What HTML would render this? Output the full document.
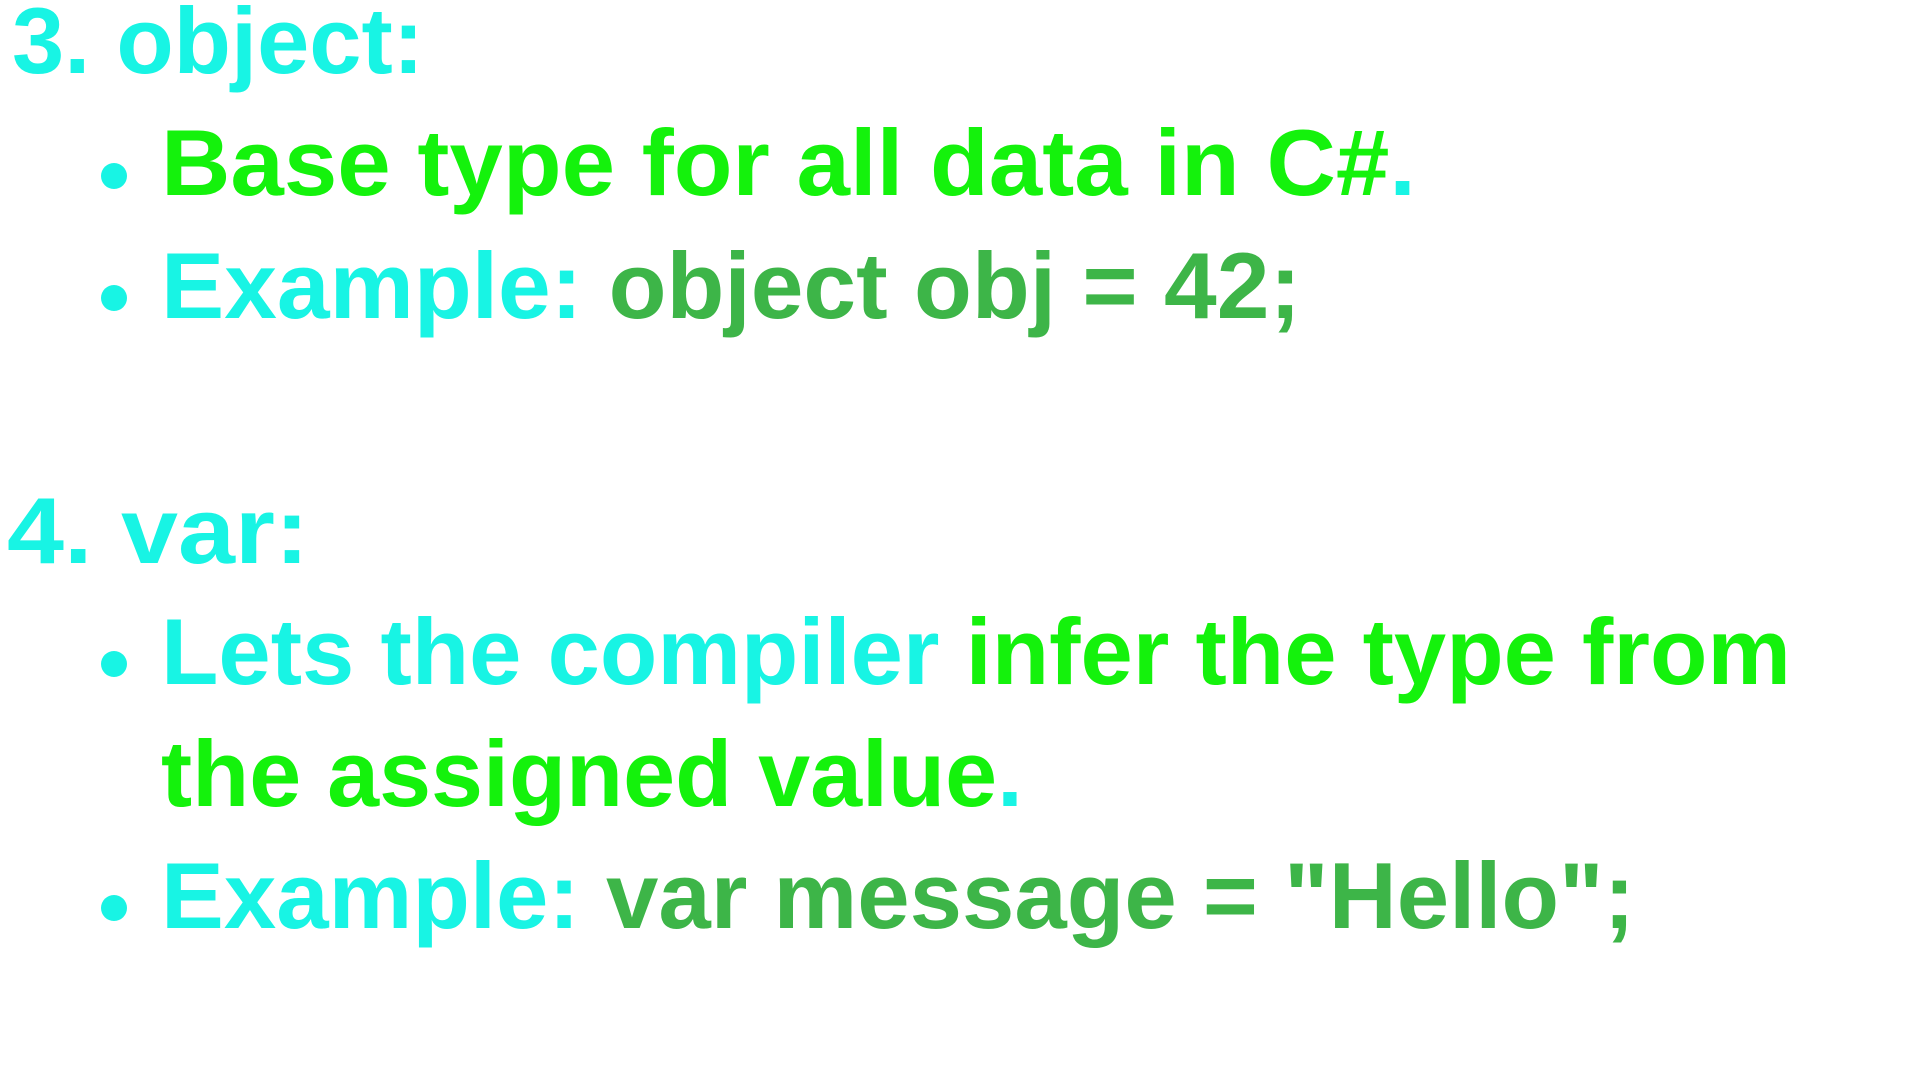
<!DOCTYPE html>
<html><head><meta charset="utf-8"><style>
html,body{margin:0;padding:0;width:1920px;height:1080px;background:#fff;overflow:hidden}
.l{position:absolute;white-space:nowrap;font-family:"Liberation Sans",sans-serif;font-weight:bold;font-size:94px;line-height:1;transform-origin:0 0}
.c{color:#18f4e4}.g{color:#14f20c}.d{color:#3db548}
.dot{position:absolute;width:26px;height:26px;border-radius:50%;background:#18f4e4}
</style></head><body>
<div class="l c" data-w="412" style="left:12px;top:-6px">3. object:</div>
<div class="dot" style="left:101px;top:163px"></div>
<div class="l g" data-w="1255" style="left:161px;top:116px">Base type for all data in C#<span class="c">.</span></div>
<div class="dot" style="left:101px;top:285px"></div>
<div class="l" data-w="1140" style="left:161px;top:239px"><span class="c">Example:</span> <span class="d">object obj = 42;</span></div>
<div class="l c" data-w="302" style="left:7px;top:484px">4. var:</div>
<div class="dot" style="left:101px;top:651px"></div>
<div class="l" data-w="1630" style="left:161px;top:605px"><span class="c">Lets the compiler</span> <span class="g">infer the type from</span></div>
<div class="l g" data-w="862" style="left:161px;top:727px">the assigned value<span class="c">.</span></div>
<div class="dot" style="left:101px;top:895px"></div>
<div class="l" data-w="1474" style="left:161px;top:849px"><span class="c">Example:</span> <span class="d">var message = "Hello";</span></div>
<script>
document.querySelectorAll('.l').forEach(function(e){var w=e.getBoundingClientRect().width;var t=+e.getAttribute('data-w');e.style.transform='scaleX('+(t/w)+')';});
</script>
</body></html>
